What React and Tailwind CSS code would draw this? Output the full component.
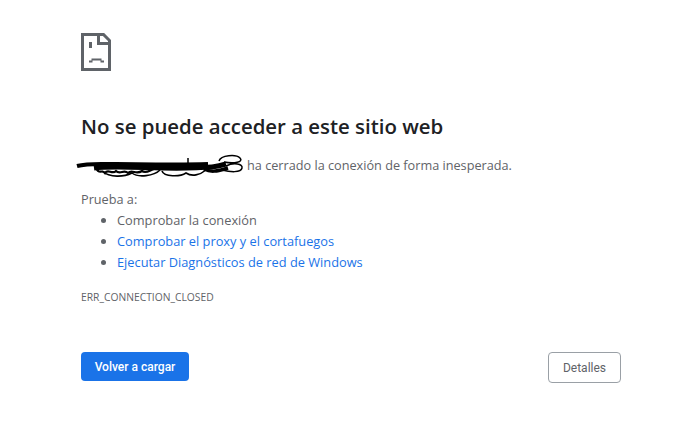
const font = { fontFamily: '"Open Sans", "Noto Sans", sans-serif' };
const roboto = { fontFamily: '"Roboto", sans-serif' };

function SadPage() {
  return (
    <svg width="30" height="38" viewBox="0 0 30 38" fill="none" className="block">
      <path d="M1.5 1.5H22.5L28.5 7.5V36.5H1.5Z" stroke="#5f6368" strokeWidth="3" fill="none" />
      <path d="M17.5 2V10.5H28" stroke="#5f6368" strokeWidth="3" />
      <rect x="8" y="9" width="3" height="6" fill="#5f6368" />
      <path d="M8 29.5V27.5H10.5V25.5H20.5V27.5H23V29.5H19.5V27.5H11.5V29.5Z" fill="#5f6368" />
    </svg>
  );
}

function Scribble() {
  return (
    <svg width="170" height="28" viewBox="0 0 170 28" fill="none" className="absolute left-[-5px] top-[-2px]">
      <path d="M1 13C12 10 22 11 40 11S100 12 132 11" stroke="#000" strokeWidth="4" />
      <path d="M18 15C40 12 80 16 110 15S140 14 150 11" stroke="#000" strokeWidth="5" />
      <path d="M20 15C23 22 26 16 29 20C32 15 36 22 40 18C44 22 48 16 52 20C56 16 60 22 66 18C70 21 74 17 78 16" stroke="#000" strokeWidth="2.2" />
      <path d="M26 18C34 25 48 24 56 20C62 25 78 23 84 17" stroke="#000" strokeWidth="1.6" />
      <path d="M86 18C88 24 104 24 110 20C116 24 124 22 130 17" stroke="#000" strokeWidth="1.6" />
      <path d="M128 16C134 19 140 19 152 15" stroke="#000" strokeWidth="3.5" />
      <path d="M143 8C145 2 160 1 164 5C168 9 158 11 148 9M150 13C158 9 167 11 166 15C165 20 154 19 146 17" stroke="#000" strokeWidth="1.5" />
      <path d="M112 5V11" stroke="#000" strokeWidth="1.5" />
    </svg>
  );
}

export default function App() {
  return (
    <div className="w-[674px] h-[426px] bg-white pl-[81px] pr-[53px] pt-[33px] flex flex-col overflow-hidden" style={font}>
      <SadPage />
      <h1 className="mt-[42px] text-[20.4px] leading-[26px] font-semibold text-[#202124]">No se puede acceder a este sitio web</h1>
      <div className="mt-[16px] flex text-[12.7px] leading-[20px] text-[#5f6368]">
        <span className="relative w-[166px] shrink-0"><Scribble /></span>
        <span>ha cerrado la conexión de forma inesperada.</span>
      </div>
      <p className="mt-[14px] text-[12.7px] leading-[20px] text-[#5f6368]">Prueba a:</p>
      <ul className="mt-[1px] pl-[36px] list-disc flex flex-col gap-[1px] text-[12.8px] leading-[20px] text-[#5f6368] marker:text-[#5f6368]">
        <li>Comprobar la conexión</li>
        <li className="text-[#1a73e8]">Comprobar el proxy y el cortafuegos</li>
        <li className="text-[#1a73e8]">Ejecutar Diagnósticos de red de Windows</li>
      </ul>
      <p className="mt-[18px] text-[10.3px] leading-[14px] text-[#5f6368]">ERR_CONNECTION_CLOSED</p>
      <div className="mt-[48px] flex justify-between items-start">
        <button className="w-[108px] h-[29px] rounded-[4px] bg-[#1a73e8] text-white text-[12px] font-medium" style={roboto}>Volver a cargar</button>
        <button className="w-[73px] h-[31px] rounded-[4px] border border-[#9aa0a6] bg-white text-[#5f6368] text-[12px]" style={roboto}>Detalles</button>
      </div>
    </div>
  );
}
